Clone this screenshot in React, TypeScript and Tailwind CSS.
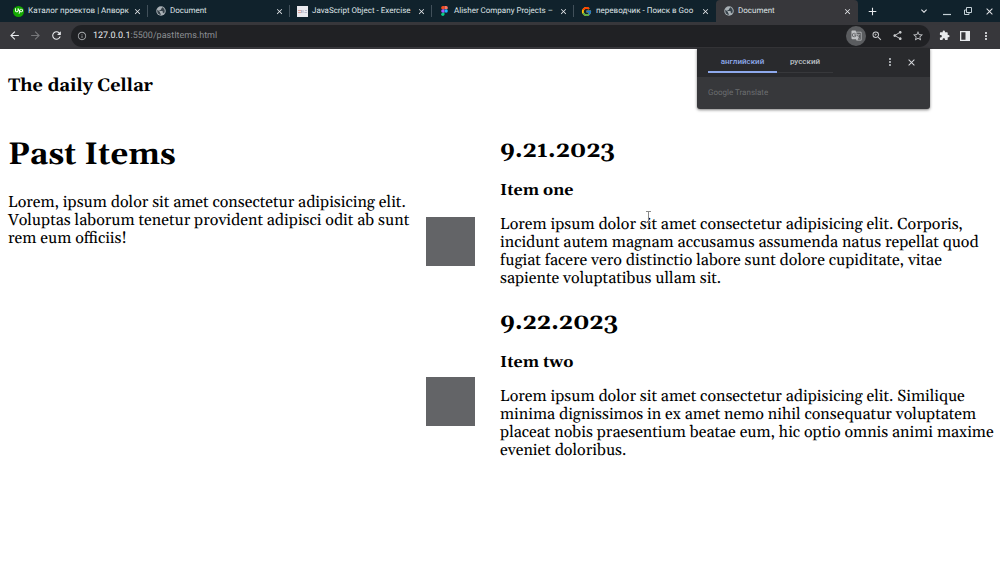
import type { ReactNode } from 'react';
import {
  MdAdd,
  MdArrowBack,
  MdArrowForward,
  MdClose,
  MdExpandMore,
  MdExtension,
  MdGTranslate,
  MdInfoOutline,
  MdMoreVert,
  MdRefresh,
  MdShare,
  MdStarBorder,
  MdZoomIn,
} from 'react-icons/md';
import { FcGoogle } from 'react-icons/fc';
import { SiUpwork } from 'react-icons/si';

const UpworkIcon = () => (
  <span className="flex size-[11px] items-center justify-center rounded-full bg-[#14a800] text-white">
    <SiUpwork size={8} />
  </span>
);

const FigmaIcon = () => (
  <svg width="7" height="10" viewBox="0 0 8 12">
    <path d="M2 0h2v4H2a2 2 0 0 1 0-4z" fill="#f24e1e" />
    <path d="M4 0h2a2 2 0 0 1 0 4H4z" fill="#ff7262" />
    <path d="M2 4h2v4H2a2 2 0 0 1 0-4z" fill="#a259ff" />
    <circle cx="6" cy="6" r="2" fill="#1abcfe" />
    <path d="M2 8h2v2a2 2 0 1 1-2-2z" fill="#0acf83" />
  </svg>
);

const ExerciseIcon = () => (
  <svg width="11" height="11" viewBox="0 0 11 11">
    <rect width="11" height="11" fill="#e9e9ee" />
    <path d="M1 4.500h3M1 6.500h3" stroke="#e0a59f" />
    <path d="M4.500 4v3M6 4v3M8 4.500h2M7.500 6.500h2.500" stroke="#b5b6c9" />
  </svg>
);

// filled globe with dark land, the browser's default favicon
const GlobeIcon = () => (
  <svg width="10" height="10" viewBox="0 0 20 20">
    <circle cx="10" cy="10" r="9.500" fill="#a9b0b5" />
    <path
      d="M3 7.500l5 4.500v2l1.500 1.500v2.300C5.500 17.500 2.500 14 2.500 10c0-.9.200-1.700.5-2.500zM12 2.500c3.200.9 5.500 4 5.500 7.500 0 1.800-.6 3.500-1.600 4.800-.3-.8-.9-1.300-1.700-1.300h-.7V11c0-.5-.4-1-1-1H7V8h2c.5 0 1-.4 1-1V5h1.500c.5 0 .9-.5.5-1z"
      fill="#37424a"
    />
  </svg>
);

const tabs: { title: string; icon: ReactNode; active?: boolean }[] = [
  { title: 'Каталог проектов | Апворк', icon: <UpworkIcon /> },
  { title: 'Document', icon: <GlobeIcon /> },
  { title: 'JavaScript Object - Exercise', icon: <ExerciseIcon /> },
  { title: 'Alisher Company Projects –', icon: <FigmaIcon /> },
  { title: 'переводчик - Поиск в Goo', icon: <FcGoogle size={11} /> },
  { title: 'Document', icon: <GlobeIcon />, active: true },
];

const items = [
  {
    date: '9.21.2023',
    title: 'Item one',
    text: 'Lorem ipsum dolor sit amet consectetur adipisicing elit. Corporis, incidunt autem magnam accusamus assumenda natus repellat quod fugiat facere vero distinctio labore sunt dolore cupiditate, vitae sapiente voluptatibus ullam sit.',
  },
  {
    date: '9.22.2023',
    title: 'Item two',
    text: 'Lorem ipsum dolor sit amet consectetur adipisicing elit. Similique minima dignissimos in ex amet nemo nihil consequatur voluptatem placeat nobis praesentium beatae eum, hic optio omnis animi maxime eveniet doloribus.',
  },
];

function TabStrip() {
  return (
    <div className="flex h-[22px] items-stretch bg-[#10222c] pl-[6px]">
      <div className="grid min-w-0 flex-1 grid-cols-6">
        {tabs.map((tab, i) => (
          <div
            key={i}
            className={
              tab.active
                ? 'flex min-w-0 items-center rounded-t-[4px] bg-[#37373b] pl-[7px]'
                : 'flex min-w-0 items-center pl-[7px]'
            }
          >
            <span className="flex w-[11px] shrink-0 justify-center">{tab.icon}</span>
            <span className="ml-1 min-w-0 flex-1 text-[8px] leading-[12px] whitespace-nowrap text-[#dfe3e6]">
              {tab.title}
            </span>
            <button aria-label="Close tab" className="text-[#e8eaed]">
              <MdClose size={9} />
            </button>
            <span className={i < 4 ? 'ml-[5px] h-3 w-px bg-[#41505a]' : 'ml-[5px] w-px'} />
          </div>
        ))}
      </div>
      <div className="flex w-[142px] shrink-0 items-center justify-between pr-[5px] pl-[8px] text-[#e8eaed]">
        <button aria-label="New tab" className="mr-[28px]">
          <MdAdd size={13} />
        </button>
        <button aria-label="Search tabs">
          <MdExpandMore size={12} />
        </button>
        <button aria-label="Minimize">
          <svg width="10" height="10" viewBox="0 0 10 10" stroke="#c4d0d6" strokeWidth="1.200">
            <path d="M1 8.500h8" />
          </svg>
        </button>
        <button aria-label="Restore">
          <svg width="10" height="10" viewBox="0 0 10 10" fill="none" stroke="#c4d0d6">
            <path d="M3.500 1.500h5v5h-5zM3.500 4h-2v4.500h4.500v-2" />
          </svg>
        </button>
        <button aria-label="Close window">
          <MdClose size={11} />
        </button>
      </div>
    </div>
  );
}

function Toolbar() {
  return (
    <div className="flex h-[27px] items-center bg-[#37373b] px-2 text-[#e8eaed]">
      <button aria-label="Back">
        <MdArrowBack size={13} />
      </button>
      <button aria-label="Forward" className="ml-[8px] text-[#77787b]">
        <MdArrowForward size={13} />
      </button>
      <button aria-label="Reload" className="ml-[8px]">
        <MdRefresh size={13} />
      </button>
      <div className="ml-[8px] flex h-[22px] min-w-0 flex-1 items-center rounded-full bg-[#202124] px-[6px]">
        <MdInfoOutline size={10} className="shrink-0 text-[#a6a9ac]" />
        <div className="relative ml-[6px] flex-1 text-[9px] leading-[14px]">
          <span aria-hidden="true" className="text-[#e8eaed]">
            127.0.0.1<span className="text-[#8b8e92]">:5500/pastItems.html</span>
          </span>
          <input
            aria-label="Address"
            defaultValue="127.0.0.1:5500/pastItems.html"
            className="absolute inset-0 w-full bg-transparent text-transparent outline-none"
          />
        </div>
        <button
          aria-label="Translate this page"
          className="flex size-5 items-center justify-center rounded-full bg-[#5a5c5f] text-[#bfc1c4]"
        >
          <MdGTranslate size={11} />
        </button>
        <button aria-label="Zoom" className="ml-[5px] text-[#c8cacd]">
          <MdZoomIn size={12} />
        </button>
        <button aria-label="Share" className="ml-[9px] text-[#c8cacd]">
          <MdShare size={11} />
        </button>
        <button aria-label="Bookmark" className="ml-[9px] text-[#c8cacd]">
          <MdStarBorder size={12} />
        </button>
      </div>
      <button aria-label="Extensions" className="ml-[9px]">
        <MdExtension size={11} />
      </button>
      <button aria-label="Side panel" className="ml-[10px]">
        <svg width="10" height="10" viewBox="0 0 10 10">
          <path fillRule="evenodd" d="M0 0h10v10H0zM1.300 1.300v7.400h4.200V1.300z" fill="currentColor" />
        </svg>
      </button>
      <button aria-label="Menu" className="ml-[10px]">
        <MdMoreVert size={12} />
      </button>
    </div>
  );
}

function TranslatePopup() {
  return (
    <div className="absolute top-[48px] right-[70px] w-[233px] overflow-hidden rounded-b-[3px] bg-[#37383b] shadow-[0_1px_3px_rgba(0,0,0,0.5)]">
      <div className="flex h-[29px] items-start bg-[#292a2d] pl-[11px] text-[8px] leading-[12px] font-medium">
        <button className="h-[25px] w-[69px] border-b-2 border-[#8ea9ec] pt-[5px] text-[#8ea9ec]">английский</button>
        <button className="h-[25px] w-[56px] border-b border-[#37383b] pt-[4px] text-[#bdc1c6]">русский</button>
        <button aria-label="Translate options" className="mt-[8px] ml-auto text-[#bdc1c6]">
          <MdMoreVert size={12} />
        </button>
        <button aria-label="Close" className="mt-[9px] mr-[13px] ml-[10px] text-[#dadce0]">
          <MdClose size={11} />
        </button>
      </div>
      <p className="px-[11px] py-[10px] text-[8px] leading-[12px] text-[#6b6d70]">Google Translate</p>
    </div>
  );
}

export default function App() {
  return (
    <div className="relative min-h-screen bg-white font-['Roboto',sans-serif] text-black [text-rendering:geometricPrecision]">
      <header>
        <TabStrip />
        <Toolbar />
      </header>
      <TranslatePopup />

      <div className="px-2 pt-[27px] font-['Georgia','Gelasio','Liberation_Serif',serif] text-[16px] leading-[18px]">
        <h3 className="text-[18px] leading-[22px] font-bold">The daily Cellar</h3>
        <main className="mt-[39px] grid grid-cols-2">
          <div className="flex">
            <section className="min-w-0 flex-1 pr-4">
              <h1 className="text-[31px] leading-[36px] font-bold">Past Items</h1>
              <p className="mt-[21px]">
                Lorem, ipsum dolor sit amet consectetur adipisicing elit. Voluptas laborum tenetur provident adipisci
                odit ab sunt rem eum officiis!
              </p>
            </section>
            <div className="flex w-[74px] shrink-0 flex-col gap-[111px] pt-[80px]">
              <div className="size-[49px] bg-[#636467]" />
              <div className="size-[49px] bg-[#636467]" />
            </div>
          </div>
          <div className="-mr-1 flex flex-col gap-[21px]">
            {items.map((item) => (
              <article key={item.date}>
                <h2 className="text-[23px] leading-[27px] font-bold">{item.date}</h2>
                <h3 className="mt-[18px] font-bold">{item.title}</h3>
                <p className="mt-4">{item.text}</p>
              </article>
            ))}
          </div>
        </main>
      </div>

      {/* text cursor */}
      <svg className="absolute top-[211px] left-[645px]" width="7" height="12" viewBox="0 0 7 12" fill="none" stroke="#8a8a8a">
        <path d="M1 .5h5M3.500 .5v11M1 11.500h5" />
      </svg>
    </div>
  );
}
